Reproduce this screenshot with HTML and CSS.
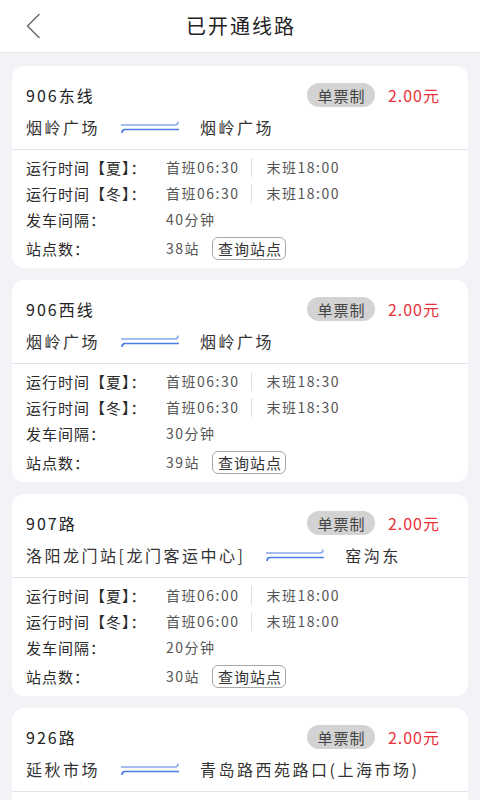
FILE: index.html
```html
<!DOCTYPE html>
<html lang="zh-CN">
<head>
<meta charset="utf-8">
<title>已开通线路</title>
<link rel="stylesheet" href="styles.css">
</head>
<body>
<header class="topbar">
  <svg class="back" width="16" height="26" viewBox="0 0 16 26"><polyline points="14,1.5 2.5,13 14,24.5" fill="none" stroke="#707070" stroke-width="1.6" stroke-linecap="round" stroke-linejoin="round"/></svg>
  <h1 class="title">已开通线路</h1>
</header>
<main class="list">
  <section class="card">
    <div class="head">
      <div class="row-top">
        <span class="name">906东线</span>
        <span class="badge">单票制</span>
        <span class="price">2.00元</span>
      </div>
      <div class="route">
        <span class="stop">烟岭广场</span>
        <svg class="arrows" width="60" height="14" viewBox="0 0 60 14"><path d="M1 5 H55 Q58 5 58 1.5" fill="none" stroke="#86a9ee" stroke-width="1.6"/><path d="M59 9.5 H5 Q2 9.5 2 13" fill="none" stroke="#4a7ee4" stroke-width="1.7"/></svg>
        <span class="stop">烟岭广场</span>
      </div>
    </div>
    <div class="info">
      <span class="label">运行时间<span class="br">【夏】：</span></span>
      <span class="val"><span>首班06:30</span><i class="sep"></i><span>末班18:00</span></span>
      <span class="label">运行时间<span class="br">【冬】：</span></span>
      <span class="val"><span>首班06:30</span><i class="sep"></i><span>末班18:00</span></span>
      <span class="label">发车间隔：</span>
      <span class="val">40分钟</span>
      <span class="label">站点数：</span>
      <span class="val"><span>38站</span><button class="query">查询站点</button></span>
    </div>
  </section>

  <section class="card">
    <div class="head">
      <div class="row-top">
        <span class="name">906西线</span>
        <span class="badge">单票制</span>
        <span class="price">2.00元</span>
      </div>
      <div class="route">
        <span class="stop">烟岭广场</span>
        <svg class="arrows" width="60" height="14" viewBox="0 0 60 14"><path d="M1 5 H55 Q58 5 58 1.5" fill="none" stroke="#86a9ee" stroke-width="1.6"/><path d="M59 9.5 H5 Q2 9.5 2 13" fill="none" stroke="#4a7ee4" stroke-width="1.7"/></svg>
        <span class="stop">烟岭广场</span>
      </div>
    </div>
    <div class="info">
      <span class="label">运行时间<span class="br">【夏】：</span></span>
      <span class="val"><span>首班06:30</span><i class="sep"></i><span>末班18:30</span></span>
      <span class="label">运行时间<span class="br">【冬】：</span></span>
      <span class="val"><span>首班06:30</span><i class="sep"></i><span>末班18:30</span></span>
      <span class="label">发车间隔：</span>
      <span class="val">30分钟</span>
      <span class="label">站点数：</span>
      <span class="val"><span>39站</span><button class="query">查询站点</button></span>
    </div>
  </section>

  <section class="card">
    <div class="head">
      <div class="row-top">
        <span class="name">907路</span>
        <span class="badge">单票制</span>
        <span class="price">2.00元</span>
      </div>
      <div class="route">
        <span class="stop">洛阳龙门站[龙门客运中心]</span>
        <svg class="arrows" width="60" height="14" viewBox="0 0 60 14"><path d="M1 5 H55 Q58 5 58 1.5" fill="none" stroke="#86a9ee" stroke-width="1.6"/><path d="M59 9.5 H5 Q2 9.5 2 13" fill="none" stroke="#4a7ee4" stroke-width="1.7"/></svg>
        <span class="stop">窑沟东</span>
      </div>
    </div>
    <div class="info">
      <span class="label">运行时间<span class="br">【夏】：</span></span>
      <span class="val"><span>首班06:00</span><i class="sep"></i><span>末班18:00</span></span>
      <span class="label">运行时间<span class="br">【冬】：</span></span>
      <span class="val"><span>首班06:00</span><i class="sep"></i><span>末班18:00</span></span>
      <span class="label">发车间隔：</span>
      <span class="val">20分钟</span>
      <span class="label">站点数：</span>
      <span class="val"><span>30站</span><button class="query">查询站点</button></span>
    </div>
  </section>

  <section class="card">
    <div class="head">
      <div class="row-top">
        <span class="name">926路</span>
        <span class="badge">单票制</span>
        <span class="price">2.00元</span>
      </div>
      <div class="route">
        <span class="stop">延秋市场</span>
        <svg class="arrows" width="60" height="14" viewBox="0 0 60 14"><path d="M1 5 H55 Q58 5 58 1.5" fill="none" stroke="#86a9ee" stroke-width="1.6"/><path d="M59 9.5 H5 Q2 9.5 2 13" fill="none" stroke="#4a7ee4" stroke-width="1.7"/></svg>
        <span class="stop">青岛路西苑路口(上海市场)</span>
      </div>
    </div>
  </section>
</main>
</body>
</html>
```
FILE: styles.css
```css
* { box-sizing: border-box; }
html, body {
  margin: 0;
  padding: 0;
}
body {
  width: 480px;
  height: 800px;
  overflow: hidden;
  background: #f2f3f7;
  font-family: "Noto Sans CJK SC", "Noto Sans", sans-serif;
  color: #333;
}
.topbar {
  height: 53px;
  background: #fff;
  border-bottom: 1px solid #e4e5e9;
  display: flex;
  align-items: center;
  justify-content: center;
  position: relative;
}
.back {
  position: absolute;
  left: 25px;
  top: 13px;
}
.title {
  margin: 0;
  font-size: 20px;
  font-weight: normal;
  letter-spacing: 2px;
  color: #222;
  line-height: 1;
  padding-left: 2px;
}
.list {
  padding: 13px 12px 0;
  display: flex;
  flex-direction: column;
  gap: 12px;
}
.card {
  background: #fff;
  border-radius: 12px;
  height: 202px;
  flex-shrink: 0;
}
.head {
  padding: 17px 28px 10px 14px;
  border-bottom: 1px solid #e2e2e4;
}
.row-top {
  display: flex;
  align-items: center;
  height: 24px;
}
.name {
  flex: 1;
  font-size: 16px;
  letter-spacing: 2px;
  color: #222;
}
.badge {
  width: 68px;
  height: 24px;
  border-radius: 12px;
  background: #d3d3d3;
  color: #444;
  font-size: 15px;
  letter-spacing: 1px;
  display: flex;
  align-items: center;
  justify-content: center;
  padding-left: 1px;
}
.price {
  margin-left: 13px;
  font-size: 16px;
  letter-spacing: 1px;
  color: #e8333b;
}
.route {
  margin-top: 8px;
  height: 24px;
  display: flex;
  align-items: center;
  gap: 20px;
  font-size: 16px;
  letter-spacing: 2.5px;
  color: #333;
}
.arrows { flex-shrink: 0; }
.info {
  padding: 4px 14px 4px 14px;
  display: grid;
  grid-template-columns: 140px 1fr;
  grid-template-rows: 26px 26px 26px 32px;
  align-items: center;
}
.label {
  font-size: 15px;
  letter-spacing: 1px;
  color: #2a2a2a;
  white-space: nowrap;
}
.val {
  font-size: 14px;
  letter-spacing: 1.5px;
  color: #555;
  display: flex;
  align-items: center;
  white-space: nowrap;
}
.sep {
  display: block;
  width: 1px;
  height: 19px;
  background: #e0e0e0;
  margin: 0 14px 0 12px;
}
.query {
  margin-left: 12px;
  height: 23px;
  padding: 0 3px 0 5px;
  border: 1px solid #a8a8a8;
  border-radius: 6px;
  background: #fff;
  font-family: inherit;
  font-size: 15px;
  letter-spacing: 1px;
  color: #333;
  line-height: 1;
  display: flex;
  align-items: center;
}
```
